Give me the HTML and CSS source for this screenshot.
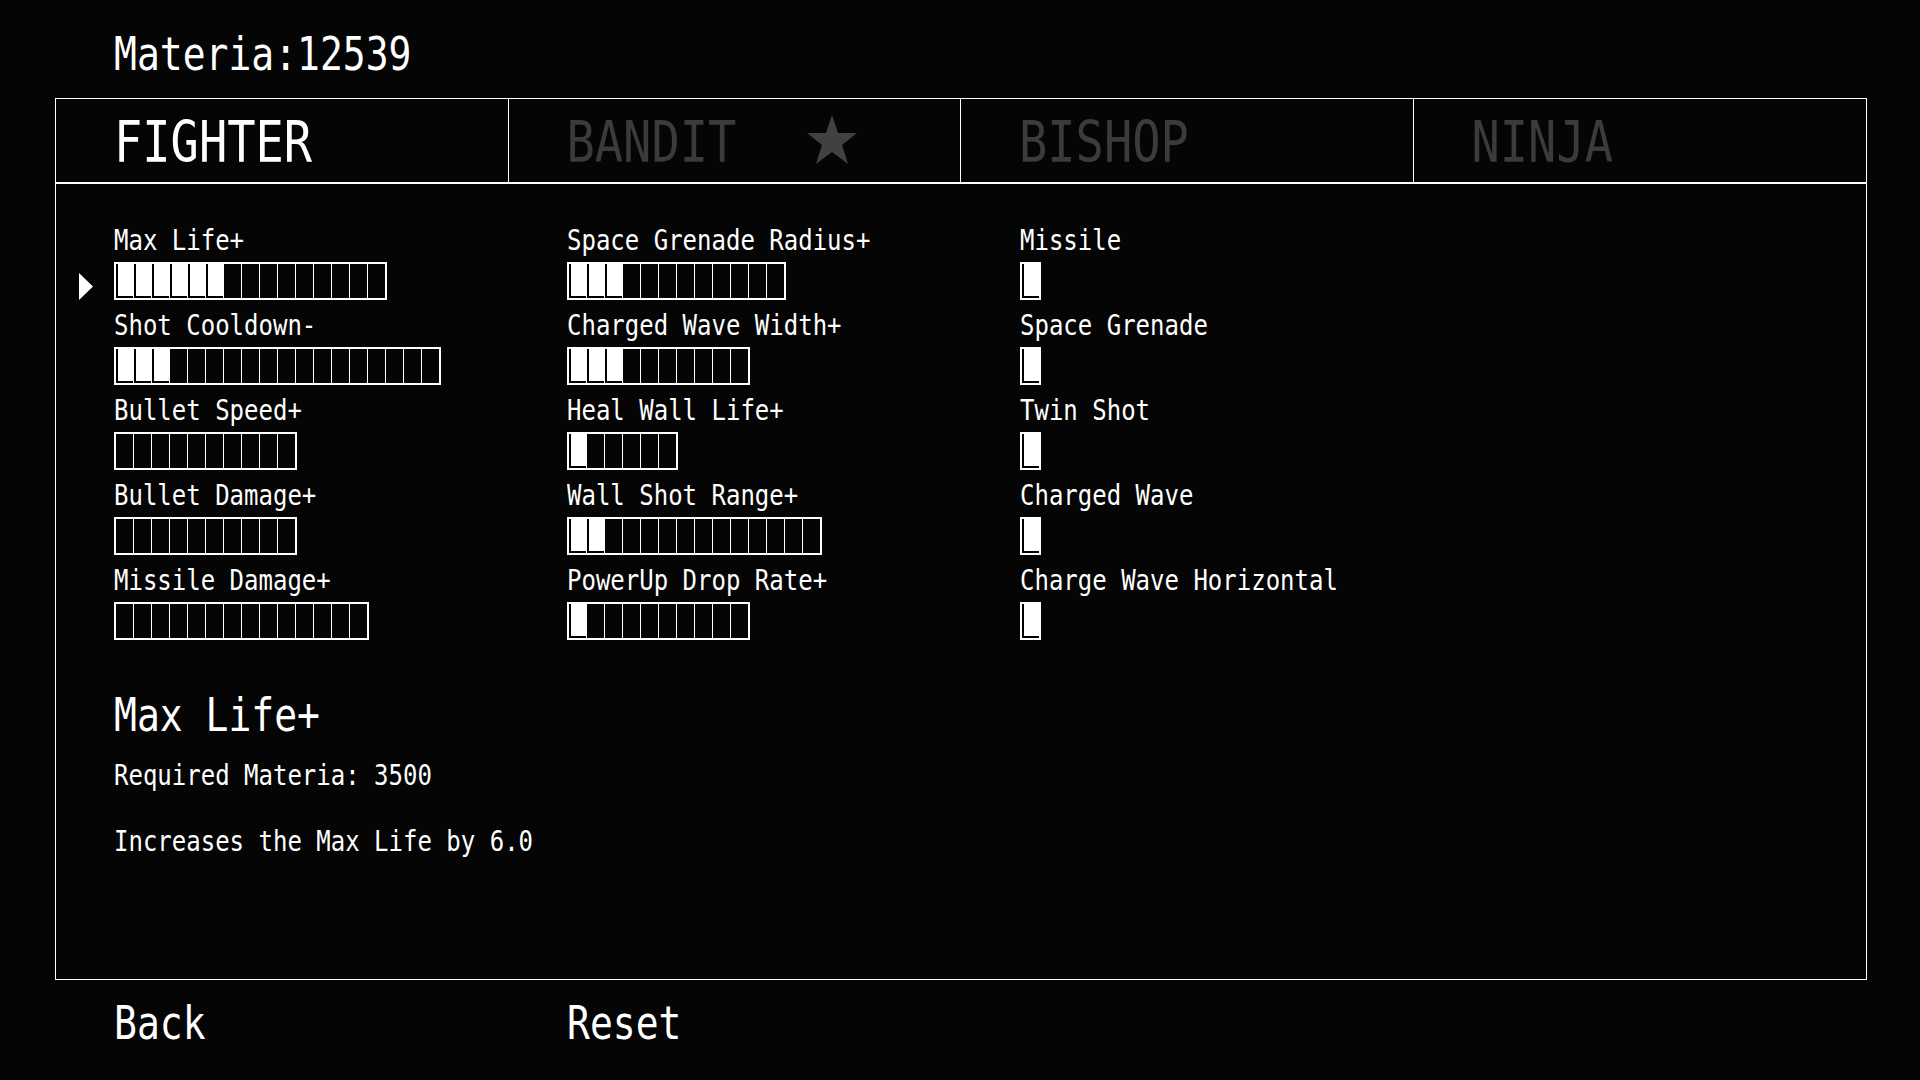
FILE: index.html
```html
<!DOCTYPE html>
<html lang="en">
<head>
    <meta charset="UTF-8">
    <meta name="viewport" content="width=device-width, initial-scale=1.0">
    <title>Upgrade - Fighter</title>
    <link rel="stylesheet" href="styles.css">
</head>
<body>
    <div class="page">
        <div class="materia"><span class="stretch">Materia:12539</span></div>

        <div class="panel">
            <div class="tabs">
                <div class="tab active"><span class="stretch">FIGHTER</span></div>
                <div class="tab">
                    <span class="stretch">BANDIT</span>
                    <svg class="star" viewBox="0 0 50 49" width="50" height="49">
                        <polygon points="25,0 31,18 50,18 35,30 41,49 25,37 9,49 15,30 0,18 19,18" />
                    </svg>
                </div>
                <div class="tab"><span class="stretch">BISHOP</span></div>
                <div class="tab"><span class="stretch">NINJA</span></div>
            </div>

            <div class="skills">
                <div class="col">
                    <div class="skill">
                        <svg class="cursor" viewBox="0 0 14 27" width="14" height="27"><polygon points="0,0 14,13.5 0,27" /></svg>
                        <div class="skill-name"><span class="stretch">Max Life+</span></div>
                        <div class="bar" data-cells="15" data-on="6"></div>
                    </div>
                    <div class="skill">
                        <div class="skill-name"><span class="stretch">Shot Cooldown-</span></div>
                        <div class="bar" data-cells="18" data-on="3"></div>
                    </div>
                    <div class="skill">
                        <div class="skill-name"><span class="stretch">Bullet Speed+</span></div>
                        <div class="bar" data-cells="10" data-on="0"></div>
                    </div>
                    <div class="skill">
                        <div class="skill-name"><span class="stretch">Bullet Damage+</span></div>
                        <div class="bar" data-cells="10" data-on="0"></div>
                    </div>
                    <div class="skill">
                        <div class="skill-name"><span class="stretch">Missile Damage+</span></div>
                        <div class="bar" data-cells="14" data-on="0"></div>
                    </div>
                </div>
                <div class="col">
                    <div class="skill">
                        <div class="skill-name"><span class="stretch">Space Grenade Radius+</span></div>
                        <div class="bar" data-cells="12" data-on="3"></div>
                    </div>
                    <div class="skill">
                        <div class="skill-name"><span class="stretch">Charged Wave Width+</span></div>
                        <div class="bar" data-cells="10" data-on="3"></div>
                    </div>
                    <div class="skill">
                        <div class="skill-name"><span class="stretch">Heal Wall Life+</span></div>
                        <div class="bar" data-cells="6" data-on="1"></div>
                    </div>
                    <div class="skill">
                        <div class="skill-name"><span class="stretch">Wall Shot Range+</span></div>
                        <div class="bar" data-cells="14" data-on="2"></div>
                    </div>
                    <div class="skill">
                        <div class="skill-name"><span class="stretch">PowerUp Drop Rate+</span></div>
                        <div class="bar" data-cells="10" data-on="1"></div>
                    </div>
                </div>
                <div class="col">
                    <div class="skill">
                        <div class="skill-name"><span class="stretch">Missile</span></div>
                        <div class="bar" data-cells="1" data-on="1"></div>
                    </div>
                    <div class="skill">
                        <div class="skill-name"><span class="stretch">Space Grenade</span></div>
                        <div class="bar" data-cells="1" data-on="1"></div>
                    </div>
                    <div class="skill">
                        <div class="skill-name"><span class="stretch">Twin Shot</span></div>
                        <div class="bar" data-cells="1" data-on="1"></div>
                    </div>
                    <div class="skill">
                        <div class="skill-name"><span class="stretch">Charged Wave</span></div>
                        <div class="bar" data-cells="1" data-on="1"></div>
                    </div>
                    <div class="skill">
                        <div class="skill-name"><span class="stretch">Charge Wave Horizontal</span></div>
                        <div class="bar" data-cells="1" data-on="1"></div>
                    </div>
                </div>
            </div>

            <div class="detail">
                <div class="detail-title"><span class="stretch">Max Life+</span></div>
                <div class="detail-cost"><span class="stretch">Required Materia: 3500</span></div>
                <div class="detail-desc"><span class="stretch">Increases the Max Life by 6.0</span></div>
            </div>
        </div>

        <div class="footer">
            <div><span class="stretch">Back</span></div>
            <div><span class="stretch">Reset</span></div>
        </div>
    </div>
    <script>
        document.querySelectorAll(".bar").forEach(function(bar){
            const cells = parseInt(bar.dataset.cells);
            const on = parseInt(bar.dataset.on);
            for (let i = 0; i < cells; i++) {
                const cell = document.createElement("div");
                cell.className = i < on ? "cell on" : "cell";
                bar.appendChild(cell);
            }
        });
    </script>
</body>
</html>
```

FILE: styles.css
```css
body {
    margin: 0;
    background: #050505;
    color: #fff;
    font-family: "DejaVu Sans Mono", "Liberation Mono", monospace;
}
.page {
    padding: 0 55px;
}
.stretch {
    display: inline-block;
    transform: scaleY(1.2);
    white-space: pre;
}
.materia {
    padding: 29px 0 19px 59px;
    font-size: 38px;
    line-height: 50px;
}
.panel {
    width: 1812px;
    height: 882px;
    box-sizing: border-box;
    border: 1px solid #fff;
}
.tabs {
    display: grid;
    grid-template-columns: repeat(4, 1fr);
    border-bottom: 2px solid #fff;
}
.tab {
    height: 83px;
    box-sizing: border-box;
    padding: 4px 0 0 58px;
    display: flex;
    align-items: center;
    border-right: 1px solid #fff;
    font-size: 47px;
    line-height: 79px;
    color: #3b3b3b;
}
.tab:last-child {
    border-right: none;
}
.tab.active {
    color: #fff;
}
.star {
    margin: -6px 0 0 71px;
    fill: #414141;
}
.skills {
    display: grid;
    grid-template-columns: repeat(3, 453px);
    padding: 35px 0 0 58px;
}
.skill {
    position: relative;
    margin-bottom: 4px;
}
.skill-name {
    font-size: 24px;
    line-height: 42px;
    height: 43px;
}
.cursor {
    position: absolute;
    left: -35px;
    top: 54px;
    fill: #fff;
}
.bar {
    display: flex;
    width: max-content;
    height: 38px;
    box-sizing: border-box;
    border: 2px solid #fff;
}
.cell {
    width: 17px;
    border-left: 1px solid #fff;
}
.cell:first-child {
    border-left: none;
}
.cell.on {
    background: #fff;
    box-shadow: inset 2px -2px 0 #000;
}
.detail {
    padding: 46px 0 0 58px;
}
.detail-title {
    font-size: 38px;
    line-height: 50px;
}
.detail-cost {
    margin-top: 14px;
    font-size: 24px;
    line-height: 42px;
}
.detail-desc {
    margin-top: 24px;
    font-size: 24px;
    line-height: 42px;
}
.footer {
    display: grid;
    grid-template-columns: repeat(2, 453px);
    padding: 18px 0 0 59px;
    font-size: 38px;
    line-height: 50px;
}
```
